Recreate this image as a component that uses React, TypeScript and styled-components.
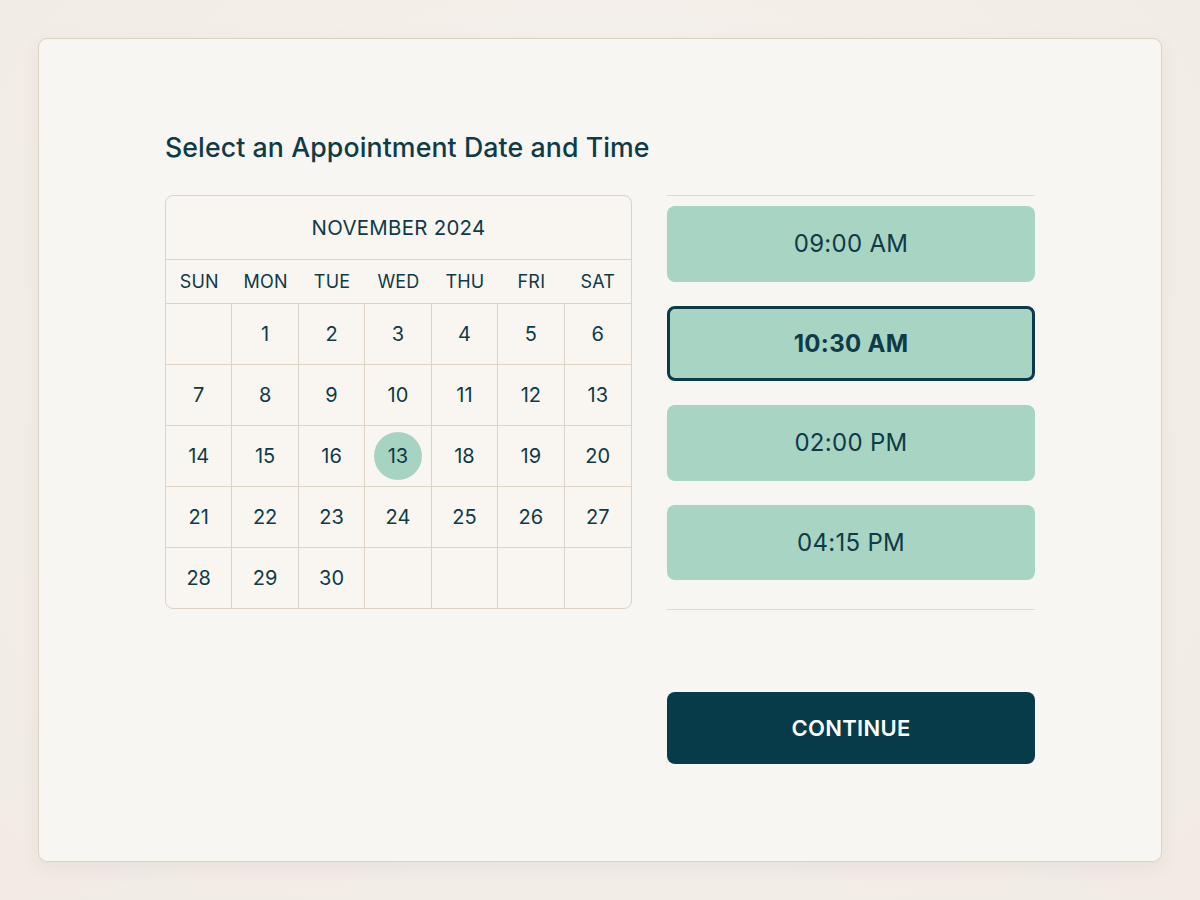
import React, { useState } from "react";
import styled, { createGlobalStyle } from "styled-components";

const GlobalStyle = createGlobalStyle`
  html, body {
    margin: 0;
    padding: 0;
  }
  body {
    font-family: Inter, "Noto Sans", "Liberation Sans", sans-serif;
    background: #f3eee8;
    color: #0f3a47;
  }
`;

const Page = styled.div`
  width: 1200px;
  height: 900px;
  box-sizing: border-box;
  padding: 38px;
  background: radial-gradient(ellipse at 50% 40%, #f6f2ed 0%, #f1ebe4 100%);
`;

const Card = styled.div`
  height: 824px;
  box-sizing: border-box;
  background: #f8f6f2;
  border: 1px solid #ddd1c4;
  border-radius: 9px;
  box-shadow: 0 6px 18px rgba(120, 90, 60, 0.08);
  display: flex;
  justify-content: center;
  padding-top: 92px;
`;

const Content = styled.div`
  width: 870px;
`;

const Title = styled.h1`
  margin: 0 0 32px;
  font-size: 26.7px;
  font-weight: 500;
  line-height: 32px;
  letter-spacing: 0.1px;
  color: #0f3a47;
`;

const Columns = styled.div`
  display: flex;
  gap: 35px;
  align-items: flex-start;
`;

const Calendar = styled.div`
  width: 467px;
  box-sizing: border-box;
  border: 1px solid #ddd2c6;
  border-radius: 8px;
  overflow: hidden;
  background: #f9f6f1;
`;

const MonthHeader = styled.div`
  height: 63px;
  display: flex;
  align-items: center;
  justify-content: center;
  border-bottom: 1px solid #ddd2c6;
  font-size: 20.4px;
  letter-spacing: 0.3px;
  color: #0f3a47;
`;

const WeekdayRow = styled.div`
  display: grid;
  grid-template-columns: repeat(7, 1fr);
  height: 43px;
  border-bottom: 1px solid #ddd2c6;
`;

const Weekday = styled.div`
  display: flex;
  align-items: center;
  justify-content: center;
  font-size: 18px;
  color: #0f3a47;
  letter-spacing: 0.2px;
`;

const DayGrid = styled.div`
  display: grid;
  grid-template-columns: repeat(7, 1fr);
`;

const DayCell = styled.div<{ $lastCol: boolean; $lastRow: boolean }>`
  height: 60px;
  display: flex;
  align-items: center;
  justify-content: center;
  border-right: ${({ $lastCol }) => ($lastCol ? "none" : "1px solid #ddd2c6")};
  border-bottom: ${({ $lastRow }) => ($lastRow ? "none" : "1px solid #ddd2c6")};
  font-size: 20px;
  color: #0f3a47;
`;

const DayMark = styled.span<{ $selected: boolean }>`
  width: 48px;
  height: 48px;
  border-radius: 50%;
  display: flex;
  align-items: center;
  justify-content: center;
  background: ${({ $selected }) => ($selected ? "#a7d3c2" : "transparent")};
`;

const RightColumn = styled.div`
  width: 368px;
  display: flex;
  flex-direction: column;
`;

const SlotPanel = styled.div`
  border-top: 1px solid #e2d7cc;
  border-bottom: 1px solid #e2d7cc;
  padding: 10px 0 29px;
  display: flex;
  flex-direction: column;
  gap: 24px;
`;

const Slot = styled.button<{ $active: boolean }>`
  height: 75.5px;
  box-sizing: border-box;
  border-radius: 8px;
  border: ${({ $active }) => ($active ? "3px solid #0d3a48" : "none")};
  background: #a8d4c3;
  font-family: inherit;
  font-size: 24px;
  font-weight: ${({ $active }) => ($active ? 700 : 400)};
  color: #0f3a47;
  letter-spacing: 0.3px;
  cursor: pointer;
`;

const ContinueButton = styled.button`
  margin-top: 82px;
  height: 72px;
  border: none;
  border-radius: 8px;
  background: #073b4a;
  color: #ffffff;
  font-family: inherit;
  font-size: 22px;
  font-weight: 600;
  letter-spacing: 0.3px;
  cursor: pointer;
`;

const weekdays = ["SUN", "MON", "TUE", "WED", "THU", "FRI", "SAT"];

// the grid is shown exactly as in the design, including the highlighted "13" in the third week
const days: (string | null)[] = [
  null, "1", "2", "3", "4", "5", "6",
  "7", "8", "9", "10", "11", "12", "13",
  "14", "15", "16", "13", "18", "19", "20",
  "21", "22", "23", "24", "25", "26", "27",
  "28", "29", "30", null, null, null, null,
];

const slots = ["09:00 AM", "10:30 AM", "02:00 PM", "04:15 PM"];

const App: React.FC = () => {
  const [selectedSlot, setSelectedSlot] = useState("10:30 AM");
  const selectedIndex = 17;

  return (
    <Page>
      <GlobalStyle />
      <Card>
        <Content>
          <Title>Select an Appointment Date and Time</Title>
          <Columns>
            <Calendar>
              <MonthHeader>NOVEMBER 2024</MonthHeader>
              <WeekdayRow>
                {weekdays.map((d) => (
                  <Weekday key={d}>{d}</Weekday>
                ))}
              </WeekdayRow>
              <DayGrid>
                {days.map((d, i) => (
                  <DayCell key={i} $lastCol={i % 7 === 6} $lastRow={i >= 28}>
                    {d && <DayMark $selected={i === selectedIndex}>{d}</DayMark>}
                  </DayCell>
                ))}
              </DayGrid>
            </Calendar>
            <RightColumn>
              <SlotPanel>
                {slots.map((s) => (
                  <Slot
                    key={s}
                    $active={s === selectedSlot}
                    onClick={() => setSelectedSlot(s)}
                  >
                    {s}
                  </Slot>
                ))}
              </SlotPanel>
              <ContinueButton>CONTINUE</ContinueButton>
            </RightColumn>
          </Columns>
        </Content>
      </Card>
    </Page>
  );
};

export default App;
